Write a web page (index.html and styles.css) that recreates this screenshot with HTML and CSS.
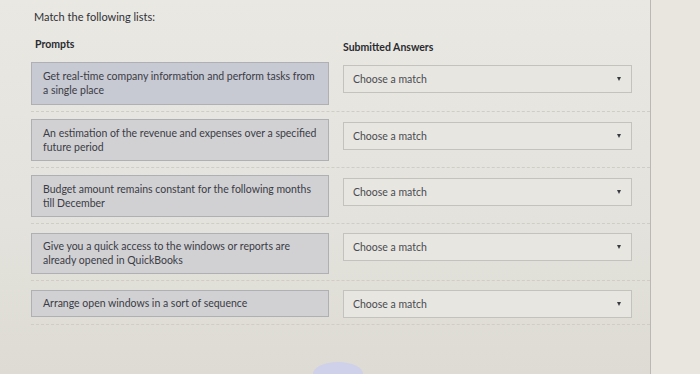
FILE: index.html
```html
<!DOCTYPE html>
<html lang="en">

<head>
    <meta charset="UTF-8">
    <meta name="viewport" content="width=device-width, initial-scale=1.0">
    <title>Match the following lists</title>
    <link rel="stylesheet" href="styles.css">
</head>

<body>
    <!-- question panel -->
    <div class="panel">
        <p class="question">Match the following lists:</p>

        <div class="row head">
            <div class="col-title">Prompts</div>
            <div class="col-title answers">Submitted Answers</div>
        </div>

        <div class="row">
            <div class="prompt first">Get real-time company information and perform tasks from a single place</div>
            <div class="select">
                <span>Choose a match</span>
                <span class="arrow"></span>
            </div>
        </div>
        <div class="row">
            <div class="prompt">An estimation of the revenue and expenses over a specified future period</div>
            <div class="select">
                <span>Choose a match</span>
                <span class="arrow"></span>
            </div>
        </div>
        <div class="row">
            <div class="prompt">Budget amount remains constant for the following months till December</div>
            <div class="select">
                <span>Choose a match</span>
                <span class="arrow"></span>
            </div>
        </div>
        <div class="row low">
            <div class="prompt short">Give you a quick access to the windows or reports are already opened in QuickBooks</div>
            <div class="select">
                <span>Choose a match</span>
                <span class="arrow"></span>
            </div>
        </div>
        <div class="row low">
            <div class="prompt single">Arrange open windows in a sort of sequence</div>
            <div class="select">
                <span>Choose a match</span>
                <span class="arrow"></span>
            </div>
        </div>
    </div>

    <!-- half hidden round button at the bottom -->
    <div class="blob"></div>
</body>

</html>
```

FILE: styles.css
```css
* {
    padding: 0;
    margin: 0;
    box-sizing: border-box;
}

html,
body {
    overflow: hidden;
}

body {
    width: 700px;
    height: 374px;
    position: relative;
    background-color: #e8e6df;
    font-family: Lato, "Open Sans", sans-serif;
    color: #3a3b40;
    display: flex;
}

.panel {
    width: 651px;
    height: 374px;
    padding: 10px 0 0 31px;
    background: linear-gradient(180deg, #e9e8e3 0%, #e3e2dc 60%, #dddbd3 100%);
    border-right: 1px solid #b9b8b2;
}

.question {
    font-size: 11px;
    line-height: 14px;
    padding-left: 3px;
    color: #2f3036;
}

.row {
    display: grid;
    grid-template-columns: 298px 289px;
    column-gap: 14px;
    align-items: start;
    padding: 7px 0 6px;
    border-bottom: 1px dashed #cfcdc5;
}

.row.head {
    padding: 13px 0 3px;
    border-bottom: none;
}

.row.head + .row {
    padding-top: 5px;
}

.row.low {
    padding-top: 9px;
}

.col-title {
    font-size: 10.5px;
    font-weight: bold;
    line-height: 14px;
    padding-left: 4px;
    color: #2a2b30;
}

.col-title.answers {
    padding-top: 3px;
    padding-left: 0;
}

.prompt {
    min-height: 42px;
    padding: 6px 8px 6px 11px;
    font-size: 10.5px;
    line-height: 14px;
    background-color: #d1d1d4;
    border: 1px solid #afb0b4;
    color: #3b3c44;
}

.prompt.first {
    min-height: 43px;
    background-color: #c7c9d3;
}

.prompt.short {
    min-height: 39px;
    padding-top: 5px;
}

.prompt.single {
    min-height: 26px;
    padding-top: 5px;
}

.select {
    height: 28px;
    margin-top: 3px;
    display: flex;
    align-items: center;
    justify-content: space-between;
    padding: 0 10px 0 9px;
    font-size: 10.5px;
    color: #4a4b50;
    background-color: #e7e6e1;
    border: 1px solid #c3c2bc;
}

.row.low .select {
    margin-top: 0;
}

.arrow {
    width: 0;
    height: 0;
    border-left: 2.5px solid transparent;
    border-right: 2.5px solid transparent;
    border-top: 4px solid #3a3b40;
}

.blob {
    position: absolute;
    left: 313px;
    top: 362px;
    width: 50px;
    height: 12px;
    border-radius: 25px 25px 0 0 / 12px 12px 0 0;
    background-color: #cfd0ea;
}
```
